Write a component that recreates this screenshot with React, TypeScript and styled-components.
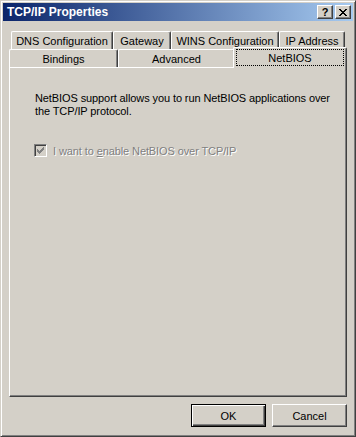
import React from "react";
import styled, { createGlobalStyle } from "styled-components";

const face = "#D4D0C8";
const shadow = "#808080";
const darkShadow = "#404040";

const GlobalStyle = createGlobalStyle`
  html, body {
    margin: 0;
    padding: 0;
    background: ${face};
  }
  body {
    font-family: "Liberation Sans", Arial, sans-serif;
    font-size: 11px;
    color: #000;
  }
`;

const Window = styled.div`
  box-sizing: border-box;
  width: 356px;
  height: 437px;
  background: ${face};
  border: 1px solid;
  border-color: ${face} ${darkShadow} ${darkShadow} ${face};
  box-shadow: inset 1px 1px #fff, inset -1px -1px ${shadow};
  padding: 2px;
  display: flex;
  flex-direction: column;
`;

const TitleBar = styled.div`
  height: 18px;
  flex: none;
  display: flex;
  align-items: center;
  padding: 0 2px 0 4px;
  background: linear-gradient(to right, #0a246a, #a6caf0);
`;

const Title = styled.span`
  flex: 1;
  color: #fff;
  font-weight: bold;
  font-size: 12px;
`;

const CaptionButton = styled.div<{ $gap?: number }>`
  box-sizing: border-box;
  width: 16px;
  height: 14px;
  margin-left: ${(p) => p.$gap ?? 0}px;
  background: ${face};
  border: 1px solid;
  border-color: #fff ${darkShadow} ${darkShadow} #fff;
  box-shadow: inset -1px -1px ${shadow};
  display: flex;
  align-items: center;
  justify-content: center;
  font-weight: bold;
  font-size: 11px;
  line-height: 1;
`;

const Body = styled.div`
  flex: 1;
  display: flex;
  flex-direction: column;
  padding: 10px 6px 0 6px;
`;

const TabRow = styled.div<{ $indent?: number }>`
  display: flex;
  height: 18px;
  padding-left: ${(p) => p.$indent ?? 0}px;
  position: relative;
  z-index: 1;
`;

const Tab = styled.div<{ $w: number; $selected?: boolean }>`
  box-sizing: border-box;
  width: ${(p) => p.$w}px;
  flex: none;
  background: ${face};
  border-left: 1px solid #fff;
  border-top: 1px solid #fff;
  border-right: 1px solid ${darkShadow};
  border-top-left-radius: 2px;
  border-top-right-radius: 2px;
  box-shadow: inset -1px 0 ${shadow};
  display: flex;
  align-items: center;
  justify-content: center;
  white-space: nowrap;
  ${(p) =>
    p.$selected &&
    `
    height: 21px;
    margin-top: -2px;
    margin-left: -2px;
    position: relative;
    z-index: 2;
  `}
`;

const Focus = styled.span`
  box-sizing: border-box;
  width: 108px;
  height: 17px;
  margin-top: -1px;
  border: 1px dotted #000;
  display: flex;
  align-items: center;
  justify-content: center;
`;

const Panel = styled.div`
  box-sizing: border-box;
  height: 330px;
  flex: none;
  border: 1px solid;
  border-color: #fff ${darkShadow} ${darkShadow} #fff;
  box-shadow: inset -1px -1px ${shadow};
  padding: 24px 0 0 25px;
  display: flex;
  flex-direction: column;
`;

const Description = styled.p`
  margin: 0;
  line-height: 13px;
  white-space: nowrap;
  letter-spacing: -0.1px;
`;

const CheckRow = styled.label`
  display: flex;
  align-items: center;
  gap: 6px;
  margin-top: 26px;
  margin-left: -1px;
  color: ${shadow};
  text-shadow: 1px 1px #fff;
  letter-spacing: -0.1px;
`;

const CheckBox = styled.span`
  box-sizing: border-box;
  width: 13px;
  height: 13px;
  flex: none;
  background: ${face};
  border: 1px solid;
  border-color: ${shadow} #fff #fff ${shadow};
  box-shadow: inset 1px 1px ${darkShadow}, inset -1px -1px ${face};
  display: flex;
  align-items: flex-start;
  justify-content: flex-start;
  padding: 2px;
`;

const Key = styled.span`
  text-decoration: underline;
`;

const ButtonRow = styled.div`
  display: flex;
  justify-content: flex-end;
  gap: 6px;
  margin-top: 7px;
`;

const Button = styled.button<{ $default?: boolean }>`
  box-sizing: border-box;
  width: 75px;
  height: 23px;
  padding: 0;
  font: inherit;
  color: #000;
  background: ${face};
  border: 1px solid;
  border-color: #fff ${darkShadow} ${darkShadow} #fff;
  box-shadow: inset -1px -1px ${shadow};
  ${(p) =>
    p.$default &&
    `
    border: 1px solid #000;
    box-shadow: inset 1px 1px #fff, inset -1px -1px ${darkShadow}, inset -2px -2px ${shadow};
  `}
`;

const Check = () => (
  <svg width="7" height="7" viewBox="0 0 7 7" shapeRendering="crispEdges">
    {[2, 3, 4, 3, 2, 1, 0].map((y, x) => (
      <rect key={x} x={x} y={y} width="1" height="3" fill={shadow} />
    ))}
  </svg>
);

const Close = () => (
  <svg width="8" height="7" viewBox="0 0 8 7" shapeRendering="crispEdges">
    {[0, 1, 2, 3, 4, 5, 6].map((i) => (
      <React.Fragment key={i}>
        <rect x={i} y={i} width="2" height="1" fill="#000" />
        <rect x={6 - i} y={i} width="2" height="1" fill="#000" />
      </React.Fragment>
    ))}
  </svg>
);

const backTabs = [
  { label: "DNS Configuration", w: 102 },
  { label: "Gateway", w: 58 },
  { label: "WINS Configuration", w: 108 },
  { label: "IP Address", w: 66 },
];

const frontTabs = [
  { label: "Bindings", w: 109 },
  { label: "Advanced", w: 117 },
];

export default function App() {
  return (
    <>
      <GlobalStyle />
      <Window>
        <TitleBar>
          <Title>TCP/IP Properties</Title>
          <CaptionButton>?</CaptionButton>
          <CaptionButton $gap={2}>
            <Close />
          </CaptionButton>
        </TitleBar>
        <Body>
          <TabRow $indent={2}>
            {backTabs.map((t) => (
              <Tab key={t.label} $w={t.w}>
                {t.label}
              </Tab>
            ))}
          </TabRow>
          <TabRow>
            {frontTabs.map((t) => (
              <Tab key={t.label} $w={t.w}>
                {t.label}
              </Tab>
            ))}
            <Tab $w={114} $selected>
              <Focus>NetBIOS</Focus>
            </Tab>
          </TabRow>
          <Panel>
            <Description>
              NetBIOS support allows you to run NetBIOS applications over
              <br />
              the TCP/IP protocol.
            </Description>
            <CheckRow>
              <CheckBox>
                <Check />
              </CheckBox>
              <span>
                I want to <Key>e</Key>nable NetBIOS over TCP/IP
              </span>
            </CheckRow>
          </Panel>
          <ButtonRow>
            <Button $default>OK</Button>
            <Button>Cancel</Button>
          </ButtonRow>
        </Body>
      </Window>
    </>
  );
}
